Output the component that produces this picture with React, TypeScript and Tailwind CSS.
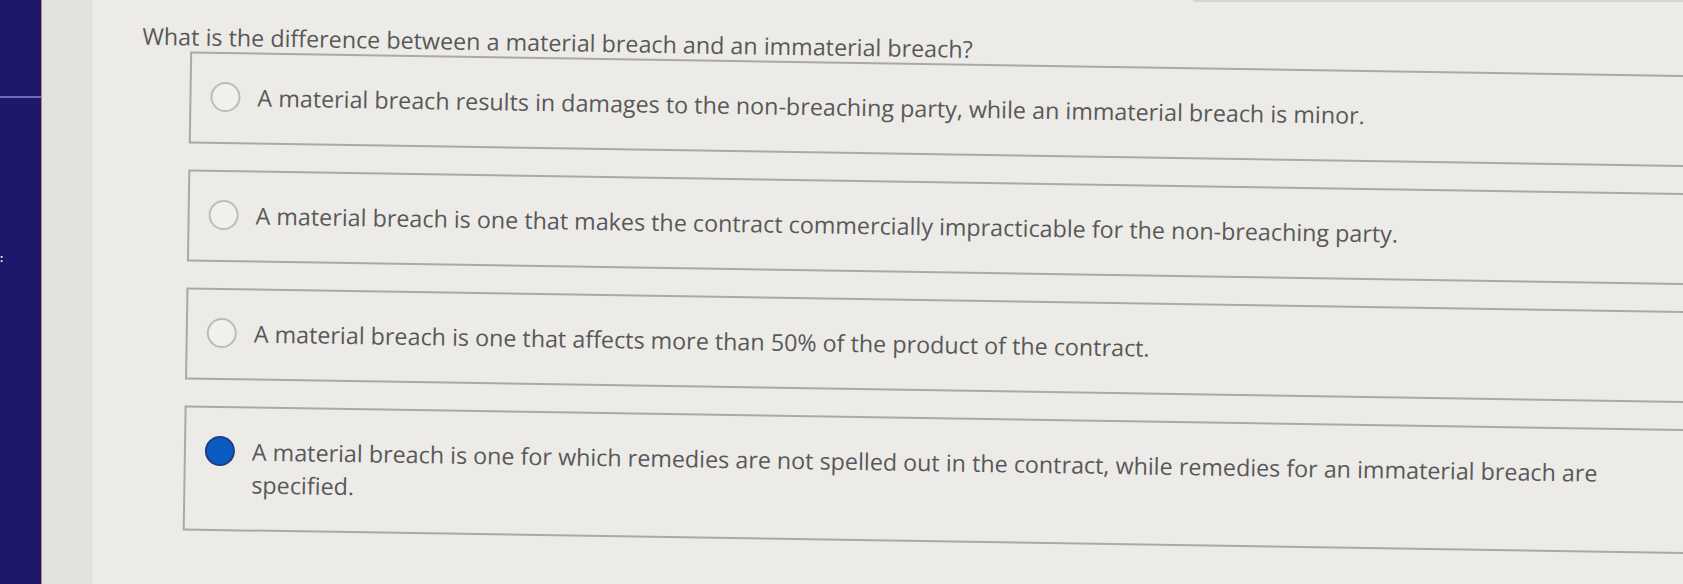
import React from 'react';

interface Choice {
  id: string;
  text: string;
  selected?: boolean;
}

const choices: Choice[] = [
  {
    id: 'a',
    text: 'A material breach results in damages to the non-breaching party, while an immaterial breach is minor.',
  },
  {
    id: 'b',
    text: 'A material breach is one that makes the contract commercially impracticable for the non-breaching party.',
  },
  {
    id: 'c',
    text: 'A material breach is one that affects more than 50% of the product of the contract.',
  },
  {
    id: 'd',
    text: 'A material breach is one for which remedies are not spelled out in the contract, while remedies for an immaterial breach are specified.',
    selected: true,
  },
];

function Radio({ checked }: { checked?: boolean }) {
  if (checked) {
    return (
      <span className="block w-[30px] h-[30px] shrink-0 rounded-full bg-[#0b5cc2] border-2 border-[#1d3f86]" />
    );
  }
  return (
    <span className="block w-[30px] h-[30px] shrink-0 rounded-full border-2 border-[#bdbcb9] bg-[#f1f0ec]" />
  );
}

function ChoiceBox({ choice }: { choice: Choice }) {
  return (
    <label className="flex items-start gap-[17px] w-[1560px] border-2 border-[#aaa9a5] pl-[19px] pr-10 py-[28px]">
      <Radio checked={choice.selected} />
      <span className="w-[1380px] text-[23.3px] leading-[33px] -mt-[1px] text-[#585858]">
        {choice.text}
      </span>
    </label>
  );
}

export default function App() {
  return (
    <div
      className="flex w-[1683px] h-[584px] overflow-hidden bg-[#ecebe7]"
      style={{ fontFamily: '"Open Sans", "Noto Sans", sans-serif' }}
    >
      {/* Dark sidebar */}
      <div className="relative w-[42px] shrink-0 bg-[#1c186b] border-r border-[#b97a8a]">
        <div className="absolute left-0 right-0 top-[96px] h-[2px] bg-[#6e6ab4]" />
        <span className="absolute left-0 top-[252px] text-[11px] leading-none text-white font-bold">:</span>
      </div>

      {/* Light gutter */}
      <div className="w-[51px] shrink-0 bg-[#e2e1dd] border-r border-[#e8e7e3]" />

      {/* Question content */}
      <div className="relative flex-1 min-w-0">
        <div className="absolute left-[1100px] right-0 top-0 h-[2px] bg-[#d6d5d1]" />
        <div className="origin-top-left rotate-[0.9deg] pl-[50px] pt-[20px]">
          <h2 className="text-[23.3px] leading-[30px] text-[#585858] whitespace-nowrap">
            What is the difference between a material breach and an immaterial breach?
          </h2>
          <div className="ml-[48px] mt-0 flex flex-col gap-[26px]">
            {choices.map((c) => (
              <ChoiceBox key={c.id} choice={c} />
            ))}
          </div>
        </div>
      </div>
    </div>
  );
}
